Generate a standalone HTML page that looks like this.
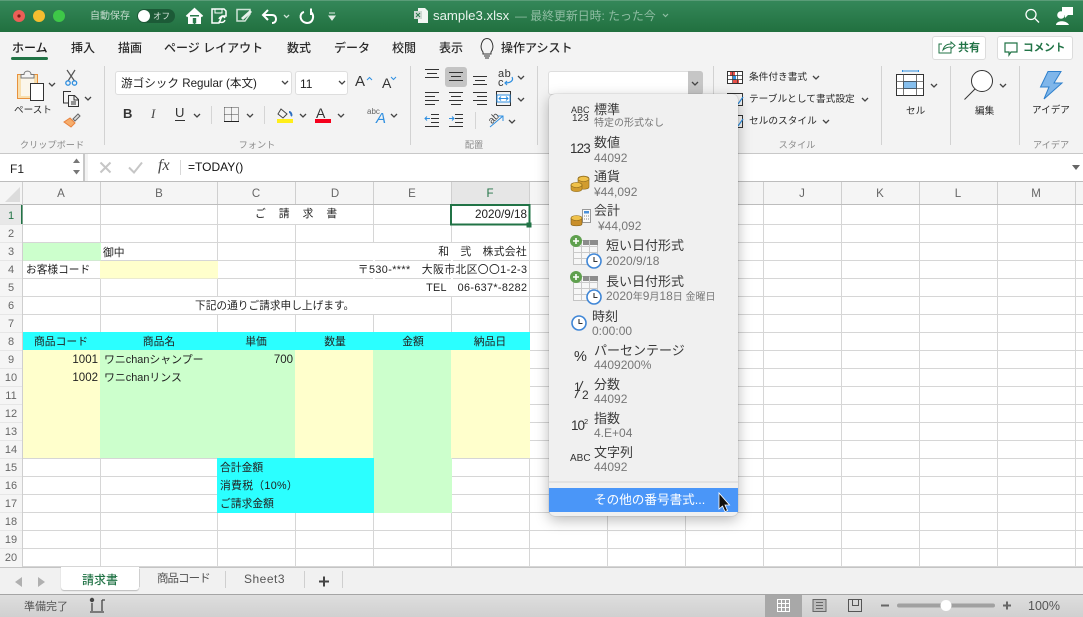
<!DOCTYPE html>
<html lang="ja"><head><meta charset="utf-8"><title>sample3.xlsx</title>
<style>
html,body{margin:0;padding:0;background:#fff}
#r{position:relative;width:1083px;height:617px;overflow:hidden;background:#fff;font-family:"Liberation Sans","Noto Sans CJK JP",sans-serif;color:#222}
.b{position:absolute}
.t{position:absolute;white-space:nowrap;line-height:16px;height:16px;font-size:11px}
.c{transform:translateX(-50%)}
.e{transform:translateX(-100%)}
.g{font-size:9.2px;color:#8a8a8a;top:137px}
.tab{font-size:12px;top:40px;color:#2b2b2b;font-weight:500}
.rn{font-size:11px;color:#666;left:11px;transform:translateX(-50%)}
.ch{font-size:11.5px;color:#666;top:186px;transform:translateX(-50%)}
.m1{font-size:13px;color:#3a3a3a}
.m2{font-size:12px;color:#777}
.m2 span{font-size:10px}
svg{position:absolute;left:0;top:0}
</style></head><body><div id="r">

<!-- title bar -->
<div class="b" style="left:0;top:0;width:1083px;height:32px;background:linear-gradient(#348759,#21703f);border-top:1px solid #5a9c78;box-sizing:border-box"></div>
<!-- ribbon -->
<div class="b" style="left:0;top:32px;width:1083px;height:122px;background:#f3f3f3;border-bottom:1px solid #c8c8c8;box-sizing:border-box"></div>
<!-- tabs -->
<div class="t tab" style="left:12px;color:#1c1c1c">ホーム</div>
<div class="b" style="left:11px;top:57px;width:37px;height:3px;background:#217346;border-radius:2px"></div>
<div class="t tab" style="left:71px">挿入</div>
<div class="t tab" style="left:118px">描画</div>
<div class="t tab" style="left:164px">ページ レイアウト</div>
<div class="t tab" style="left:287px">数式</div>
<div class="t tab" style="left:334px">データ</div>
<div class="t tab" style="left:392px">校閲</div>
<div class="t tab" style="left:439px">表示</div>
<div class="t tab" style="left:501px">操作アシスト</div>
<!-- share/comment -->
<div class="b" style="left:932px;top:36px;width:54px;height:24px;background:#fff;border:1px solid #dcdcdc;border-radius:3px;box-sizing:border-box"></div>
<div class="b" style="left:997px;top:36px;width:76px;height:24px;background:#fff;border:1px solid #dcdcdc;border-radius:3px;box-sizing:border-box"></div>
<div class="t" style="left:958px;top:40px;font-size:11px;color:#217346;font-weight:700">共有</div>
<div class="t" style="left:1023px;top:40px;font-size:10.6px;color:#217346;font-weight:700">コメント</div>
<!-- combos -->
<div class="b" style="left:115px;top:71px;width:177px;height:24px;background:#fff;border:1px solid #dedede;border-radius:3px;box-sizing:border-box"></div>
<div class="b" style="left:295px;top:71px;width:53px;height:24px;background:#fff;border:1px solid #dedede;border-radius:3px;box-sizing:border-box"></div>
<div class="t" style="left:121px;top:76px;font-size:11.6px;color:#222">游ゴシック Regular (本文)</div>
<div class="t" style="left:300px;top:76px;font-size:12px;color:#222">11</div>
<div class="b" style="left:548px;top:71px;width:155px;height:24px;background:#fff;border:1px solid #dedede;border-radius:3px;box-sizing:border-box"></div>
<div class="b" style="left:688px;top:71px;width:15px;height:24px;background:#c6c6c6;border-radius:0 3px 3px 0"></div>
<div class="b" style="left:445px;top:67px;width:22px;height:20px;background:#c4c4c4;border-radius:3px"></div>

<!-- ribbon text -->
<div class="t" style="left:14px;top:103px;font-size:9.6px;color:#2b2b2b">ペースト</div>
<div class="t g" style="left:52px;transform:translateX(-50%)">クリップボード</div>
<div class="t g" style="left:257px;transform:translateX(-50%)">フォント</div>
<div class="t g" style="left:474px;transform:translateX(-50%)">配置</div>
<div class="t g" style="left:797px;transform:translateX(-50%)">スタイル</div>
<div class="t g" style="left:1051px;transform:translateX(-50%)">アイデア</div>
<div class="t" style="left:749px;top:70px;font-size:9.7px;color:#2b2b2b">条件付き書式</div>
<div class="t" style="left:749px;top:92px;font-size:9.7px;color:#2b2b2b">テーブルとして書式設定</div>
<div class="t" style="left:749px;top:114px;font-size:9.7px;color:#2b2b2b">セルのスタイル</div>
<div class="t" style="left:906px;top:104px;font-size:9.6px;color:#2b2b2b">セル</div>
<div class="t" style="left:975px;top:104px;font-size:9.6px;color:#2b2b2b">編集</div>
<div class="t" style="left:1032px;top:103px;font-size:9.6px;color:#2b2b2b">アイデア</div>
<div class="t" style="left:123px;top:106px;font-size:13px;font-weight:700;color:#333">B</div>
<div class="t" style="left:151px;top:106px;font-size:13px;font-style:italic;font-family:'Liberation Serif',serif;color:#444">I</div>
<div class="t" style="left:175px;top:105px;font-size:13px;color:#333">U</div>
<div class="t" style="left:355px;top:74px;font-size:15px;color:#333">A</div>
<div class="t" style="left:382px;top:75px;font-size:14px;color:#333">A</div>
<div class="t" style="left:367px;top:104px;font-size:8px;color:#666">abc</div>
<div class="t" style="left:376px;top:111px;font-size:15px;font-style:italic;color:#2f8fe0">A</div>
<div class="t" style="left:498px;top:66px;font-size:11px;color:#333;letter-spacing:.5px">ab</div>
<div class="t" style="left:498px;top:75px;font-size:11px;color:#333">c</div>
<div class="t" style="left:316px;top:105px;font-size:14px;color:#333">A</div>

<!-- title text -->
<div class="t" style="left:90px;top:9px;font-size:10px;color:#c5dcce">自動保存</div>
<div class="t" style="left:433px;top:8px;font-size:13.2px;color:#e8f2ec">sample3.xlsx</div>
<div class="t" style="left:515px;top:8px;font-size:11.9px;color:#8fbda3">— 最終更新日時: たった今</div>

<!-- formula bar -->
<div class="b" style="left:0;top:154px;width:1083px;height:28px;background:#fff;border-bottom:1px solid #bdbdbd;box-sizing:border-box"></div>
<div class="b" style="left:0;top:154px;width:85px;height:27px;background:#fff;border-right:2px solid #c8c8c8;box-sizing:border-box"></div>
<div class="b" style="left:85px;top:154px;width:3px;height:27px;background:#f3f3f3"></div>
<div class="t" style="left:10px;top:161px;font-size:12px;color:#222">F1</div>
<div class="t" style="left:188px;top:159px;font-size:12px;color:#111">=TODAY()</div>
<div class="t" style="left:158px;top:158px;font-size:16px;font-style:italic;font-family:'Liberation Serif',serif;color:#444">fx</div>

<!-- header row -->
<div class="b" style="left:0;top:182px;width:1083px;height:23px;background:#f5f5f5;border-bottom:1px solid #bdbdbd;box-sizing:border-box"></div>
<div class="b" style="left:0;top:205px;width:22px;height:362px;background:#f5f5f5"></div>
<div class="b" style="left:451px;top:182px;width:78px;height:22px;background:#e6e6e6"></div>
<div class="b" style="left:0;top:205px;width:22px;height:19px;background:#e8e8e8"></div>

<!-- grid -->
<svg width="1083" height="617" viewBox="0 0 1083 617">
<polygon points="20,187 20,202 5,202" fill="#dcdcdc"/>
<path d="M22.5 182V567M100.5 182V204M217.5 182V204M295.5 182V204M373.5 182V204M451.5 182V204M529.5 182V204M607.5 182V204M685.5 182V204M763.5 182V204M841.5 182V204M919.5 182V204M997.5 182V204M1075.5 182V204" stroke="#cfcfcf" fill="none"/>
<path d="M0 224.5H22M0 242.5H22M0 260.5H22M0 278.5H22M0 296.5H22M0 314.5H22M0 332.5H22M0 350.5H22M0 368.5H22M0 386.5H22M0 404.5H22M0 422.5H22M0 440.5H22M0 458.5H22M0 476.5H22M0 494.5H22M0 512.5H22M0 530.5H22M0 548.5H22" stroke="#e6e6e6" fill="none"/>
<path d="M100.5 205V567M217.5 205V567M295.5 205V567M373.5 205V567M451.5 205V567M529.5 205V567M607.5 205V567M685.5 205V567M763.5 205V567M841.5 205V567M919.5 205V567M997.5 205V567M1075.5 205V567M23 224.5H1083M23 242.5H1083M23 260.5H1083M23 278.5H1083M23 296.5H1083M23 314.5H1083M23 332.5H1083M23 350.5H1083M23 368.5H1083M23 386.5H1083M23 404.5H1083M23 422.5H1083M23 440.5H1083M23 458.5H1083M23 476.5H1083M23 494.5H1083M23 512.5H1083M23 530.5H1083M23 548.5H1083M23 566.5H1083" stroke="#d6d6d6" fill="none"/>
<!-- merges -->
<rect x="295" y="205" width="2" height="19" fill="#fff"/>
<rect x="373" y="243" width="2" height="53" fill="#fff"/><rect x="451" y="243" width="2" height="53" fill="#fff"/>
<rect x="217" y="297" width="2" height="17" fill="#fff"/><rect x="295" y="297" width="2" height="17" fill="#fff"/><rect x="373" y="297" width="2" height="17" fill="#fff"/>
<!-- fills -->
<rect x="23" y="243" width="78" height="17.5" fill="#ccffcc"/>
<rect x="100" y="261" width="118" height="17.5" fill="#ffffcc"/>
<rect x="23" y="332" width="507" height="18" fill="#2bffff"/>
<rect x="23" y="350" width="78" height="108" fill="#ffffcc"/>
<rect x="100" y="350" width="196" height="108" fill="#ccffcc"/>
<rect x="295" y="350" width="79" height="108" fill="#ffffcc"/>
<rect x="373" y="350" width="79" height="163" fill="#ccffcc"/>
<rect x="451" y="350" width="79" height="108" fill="#ffffcc"/>
<rect x="217" y="458" width="157" height="55" fill="#2bffff"/>
<!-- selection -->
<rect x="451" y="205" width="78.5" height="19.5" fill="#fff" stroke="#217346" stroke-width="2"/>
<rect x="526.5" y="222.5" width="5" height="5" fill="#217346"/>
<rect x="21" y="205" width="1.5" height="19" fill="#217346"/>
</svg>

<!-- col letters -->
<div class="t ch" style="left:61px">A</div><div class="t ch" style="left:159px">B</div><div class="t ch" style="left:256px">C</div><div class="t ch" style="left:335px">D</div><div class="t ch" style="left:412px">E</div><div class="t ch" style="left:490px;color:#217346">F</div><div class="t ch" style="left:568px">G</div><div class="t ch" style="left:646px">H</div><div class="t ch" style="left:724px">I</div><div class="t ch" style="left:802px">J</div><div class="t ch" style="left:880px">K</div><div class="t ch" style="left:958px">L</div><div class="t ch" style="left:1036px">M</div>
<!-- row numbers -->
<div class="t rn" style="top:208px;color:#217346">1</div><div class="t rn" style="top:226px">2</div><div class="t rn" style="top:244px">3</div><div class="t rn" style="top:262px">4</div><div class="t rn" style="top:280px">5</div><div class="t rn" style="top:298px">6</div><div class="t rn" style="top:316px">7</div><div class="t rn" style="top:334px">8</div><div class="t rn" style="top:352px">9</div><div class="t rn" style="top:370px">10</div><div class="t rn" style="top:388px">11</div><div class="t rn" style="top:406px">12</div><div class="t rn" style="top:424px">13</div><div class="t rn" style="top:442px">14</div><div class="t rn" style="top:460px">15</div><div class="t rn" style="top:478px">16</div><div class="t rn" style="top:496px">17</div><div class="t rn" style="top:514px">18</div><div class="t rn" style="top:532px">19</div><div class="t rn" style="top:550px">20</div>

<!-- cells -->
<div class="t" style="left:255px;top:206px;letter-spacing:13px;font-size:10.8px">ご請求書</div>
<div class="t e" style="left:527px;top:207px;font-size:11.7px">2020/9/18</div>
<div class="t" style="left:103px;top:245px;font-size:10.8px">御中</div>
<div class="t" style="left:26px;top:262px;font-size:10.7px">お客様コード</div>
<div class="t e" style="left:527px;top:244px;font-size:10.8px;letter-spacing:.3px">和　弐　株式会社</div>
<div class="t e" style="left:527.4px;top:262px;font-size:10.8px;letter-spacing:.4px">〒530-****　大阪市北区〇〇1-2-3</div>
<div class="t e" style="left:527.3px;top:280px;font-size:10.8px;letter-spacing:.35px">TEL　06-637*-8282</div>
<div class="t" style="left:195px;top:298px;font-size:10.7px">下記の通りご請求申し上げます。</div>
<div class="t c" style="left:61px;top:334px;font-size:10.8px">商品コード</div>
<div class="t c" style="left:159px;top:334px;font-size:10.8px">商品名</div>
<div class="t c" style="left:256px;top:334px;font-size:10.8px">単価</div>
<div class="t c" style="left:335px;top:334px;font-size:10.8px">数量</div>
<div class="t c" style="left:413px;top:334px;font-size:10.8px">金額</div>
<div class="t c" style="left:490px;top:334px;font-size:10.8px">納品日</div>
<div class="t e" style="left:98px;top:352px;font-size:11.5px">1001</div>
<div class="t" style="left:104px;top:352px;font-size:10.9px">ワニchanシャンプー</div>
<div class="t e" style="left:293px;top:352px;font-size:11.5px">700</div>
<div class="t e" style="left:98px;top:370px;font-size:11.5px">1002</div>
<div class="t" style="left:104px;top:370px;font-size:10.9px">ワニchanリンス</div>
<div class="t" style="left:220px;top:460px;font-size:10.8px">合計金額</div>
<div class="t" style="left:220px;top:478px;font-size:10.8px;letter-spacing:.3px">消費税（10%）</div>
<div class="t" style="left:220px;top:496px;font-size:10.8px">ご請求金額</div>

<!-- tab bar -->
<div class="b" style="left:0;top:567px;width:1083px;height:27px;background:#f1f1f1;border-top:1px solid #c4c4c4;box-sizing:border-box"></div>
<div class="b" style="left:61px;top:567px;width:78px;height:23px;background:#fff;border-radius:0 0 3px 3px;box-shadow:0 1px 1px #bbb"></div>
<div class="t" style="left:82px;top:572px;font-size:12px;color:#217346;font-weight:500">請求書</div>
<div class="t" style="left:157px;top:571px;font-size:11.5px;letter-spacing:-.95px;color:#555">商品コード</div>
<div class="t" style="left:244px;top:571px;font-size:12px;letter-spacing:.5px;color:#555">Sheet3</div>
<!-- status bar -->
<div class="b" style="left:0;top:594px;width:1083px;height:23px;background:linear-gradient(#dedede,#d0d0d0);border-top:1px solid #a5a5a5;box-sizing:border-box"></div>
<div class="b" style="left:765px;top:595px;width:37px;height:22px;background:#a8a8a8"></div>
<div class="t" style="left:24px;top:599px;font-size:11px;color:#555">準備完了</div>
<div class="t" style="left:1028px;top:598px;font-size:12.5px;color:#555">100%</div>

<!-- icons -->
<svg width="1083" height="617" viewBox="0 0 1083 617" fill="none">
<!-- traffic lights -->
<circle cx="19" cy="16" r="6" fill="#ec5f57"/><circle cx="19" cy="16" r="1.6" fill="#7d1a14"/>
<circle cx="39" cy="16" r="6" fill="#f5bd2f"/><circle cx="59" cy="16" r="6" fill="#3ec848"/>
<!-- toggle -->
<rect x="137" y="9" width="38" height="14" rx="7" fill="#1c5a37"/><circle cx="144" cy="16" r="6" fill="#fff"/>
<!-- home -->
<path d="M186.500 16.500L194.500 9L202.500 16.500M189 15V23H193V18H196V23H200V15" stroke="#fff" stroke-width="2" fill="#fff" fill-rule="evenodd"/>
<rect x="192.800" y="18" width="3.400" height="5.500" fill="#2a7a4c"/>
<!-- save-sync -->
<path d="M212 9H224L226 11V16H222L219 23H212Z" stroke="#fff" stroke-width="1.500" fill="none"/><path d="M215 9V13H222V9" stroke="#fff"/>
<path d="M219 19C220 16 224 16 225 18M225 20C224 23 220 23 219 21" stroke="#fff" stroke-width="1.400"/>
<!-- edit -->
<path d="M237 9.500H250V14L245 21H237Z" stroke="#cfe3d7" stroke-width="1.500"/><path d="M241 18L250 10L252 12L243 20Z" fill="#e6f0ea"/>
<!-- undo -->
<path d="M268 10L263 15L268 20M263 15H272C275 15 276 17 276 19C276 21 275 23 272 23" stroke="#fff" stroke-width="2"/>
<path d="M284 15L286.500 17.500L289 15" stroke="#cfe3d7" stroke-width="1.300"/>
<!-- redo -->
<path d="M304 12C299 13 299 22 307 23C313 23 315 16 311 12L311 9M311 8.500V15" stroke="#fff" stroke-width="2"/>
<path d="M329 13H335M329 16H335L332 20Z" stroke="#e0ece5" fill="#e0ece5"/>
<!-- file icon -->
<path d="M418 8H425L428 11V23H418Z" fill="#f2f6f3"/><rect x="414" y="11" width="8" height="8" fill="#cfd9d3"/><path d="M416 13L420 17M420 13L416 17" stroke="#2a7a4c"/>
<path d="M663 14L665.500 16.500L668 14" stroke="#8fbda3" stroke-width="1.200"/>
<!-- search/person -->
<circle cx="1031" cy="14.500" r="5" stroke="#fff" stroke-width="1.300"/><path d="M1035 18.500L1039 22.500" stroke="#fff" stroke-width="1.300"/>
<circle cx="1061" cy="15" r="3.800" fill="#fff"/><path d="M1056 25C1056 20 1067 20 1069 25Z" fill="#fff"/><path d="M1062 7H1073V15H1068L1065 18V15H1062Z" fill="#fff"/>
<!-- bulb -->
<path d="M483 52C479 47 482 38.500 487 38.500C492 38.500 495 47 491 52V54H483ZM484 56H490M485 58H489" stroke="#333" stroke-width="1"/>
<!-- share icons -->
<path d="M942 44H939V53H951V49M943 50C944 46 947 44 951 44V42L955 45.500L951 49V47C948 47 945 48 943 50Z" stroke="#217346" stroke-width="1"/>
<path d="M1005 43H1017V52H1011L1009 55V52H1005Z" stroke="#217346" stroke-width="1.200"/>
<!-- separators -->
<path d="M104.500 66V145M410.500 66V145M537.500 66V145M713.500 66V145M881.500 66V145M950.500 66V145M1019.500 66V145" stroke="#d2d2d2"/>
<path d="M211.500 106V124M264.500 106V124" stroke="#d5d5d5"/><path d="M475.500 112V129" stroke="#d5d5d5"/>
<!-- paste -->
<rect x="17.500" y="74.500" width="20" height="24" fill="#f8dfae" stroke="#e8913c"/><rect x="21" y="74" width="13" height="22" fill="#fbf6ea"/>
<path d="M21 78V74.500H24C24 70 31 70 31 74.500H34V78Z" fill="#f4f4f4" stroke="#777"/>
<rect x="30.500" y="83.500" width="13" height="17" fill="#fff" stroke="#333"/>
<!-- scissors -->
<path d="M67 70L74.500 81M75 70L68 81" stroke="#555" stroke-width="1.200"/><circle cx="68" cy="83" r="2.200" stroke="#2f8fe0" stroke-width="1.300"/><circle cx="74.500" cy="83" r="2.200" stroke="#2f8fe0" stroke-width="1.300"/>
<!-- copy -->
<path d="M68 103H63.500V91.500H71" stroke="#333" stroke-width="1"/><path d="M68.500 95.500H74.500L78.500 99.500V106.500H68.500ZM74 95.500V100H78.500M71 102H76M71 104H76" stroke="#333" stroke-width="1"/>
<!-- brush -->
<path d="M70 118L75 123L71 127L64 122Z" fill="#f6ad6c" stroke="#e8813c"/><path d="M73 119L78 114L80 116L75 121Z" fill="#ddd" stroke="#666"/>
<!-- chevrons -->
<g stroke="#444" stroke-width="1.300">
<path d="M49 83L52 86L55 83"/><path d="M85 97L88 100L91 97"/>
<path d="M282 81L285 84L288 81"/><path d="M339 81L342 84L345 81"/>
<path d="M194 114L197 117L200 114"/><path d="M247 114L250 117L253 114"/><path d="M300 114L303 117L306 114"/><path d="M338 114L341 117L344 114"/><path d="M391 114L394 117L397 114"/>
<path d="M518 76L521 79L524 76"/><path d="M518 98L521 101L524 98"/><path d="M509 120L512 123L515 120"/>
<path d="M692 82L695 85L698 82"/>
<path d="M813 76L816 79L819 76"/><path d="M862 98L865 101L868 98"/><path d="M823 120L826 123L829 120"/>
<path d="M931 84L934 87L937 84"/><path d="M1000 84L1003 87L1006 84"/>
</g>
<path d="M367 80L369.500 77.500L372 80" stroke="#2f8fe0" stroke-width="1"/><path d="M391 77L393.500 79.500L396 77" stroke="#2f8fe0" stroke-width="1"/>
<!-- U underline -->
<path d="M175 120.500H185" stroke="#333"/>
<!-- borders -->
<path d="M224.500 107.500H238.500V120.500M224.500 107.500V120.500M231.500 107.500V120.500M224.500 114.500H238.500" stroke="#444" stroke-dasharray="1 1"/><path d="M224 121.500H239" stroke="#222"/>
<!-- fill -->
<path d="M281 109L287 114L283 118L278 114Z" stroke="#444"/><path d="M289 112C291 112 292 115 291 116" stroke="#2f6fc0" stroke-width="2"/>
<rect x="277" y="119" width="16" height="4" fill="#ffee1a"/><rect x="315" y="119" width="16" height="4" fill="#f5001c"/>
<!-- align -->
<g stroke="#333" stroke-width="1">
<path d="M425 69.500H439M427 73.500H437M425 77.500H439"/>
<path d="M449 72.500H463M451 76.500H461M449 80.500H463"/>
<path d="M473 76.500H487M475 80.500H485M473 84.500H487"/>
<path d="M425 92.500H439M425 96.500H435M425 100.500H439M425 104.500H435"/>
<path d="M449 92.500H463M451 96.500H461M449 100.500H463M451 104.500H461"/>
<path d="M473 92.500H487M477 96.500H487M473 100.500H487M477 104.500H487"/>
<path d="M431 114.500H439M431 118.500H439M431 122.500H439M425 126.500H439"/>
<path d="M455 114.500H463M455 118.500H463M455 122.500H463M449 126.500H463"/>
<rect x="496.500" y="91.500" width="14" height="14"/>
</g>
<rect x="497" y="95" width="13" height="7" fill="#fff" stroke="#2f8fe0"/><path d="M499 98.500H508M501 96.500L499 98.500L501 100.500M506 96.500L508 98.500L506 100.500" stroke="#2f8fe0"/>
<path d="M430 118.500H425M427 116.500L425 118.500L427 120.500M449 118.500H454M452 116.500L454 118.500L452 120.500" stroke="#2f8fe0"/>
<path d="M512 77C514 81 510 83 505 83M507 81L505 83L507 85" stroke="#2f8fe0" stroke-width="1.200"/>
<text x="488" y="121" font-size="10" fill="#444" transform="rotate(-45 494 118)" font-family="Liberation Sans">ab</text>
<path d="M490 127L503 116M498 116H503V121" stroke="#2f8fe0" stroke-width="1"/>
<!-- styles icons -->
<rect x="727.500" y="71.500" width="15" height="12" fill="#fff" stroke="#333"/><rect x="730" y="72" width="5" height="4" fill="#e8504a"/><rect x="733" y="80" width="6" height="3" fill="#e8504a"/><rect x="733" y="76" width="3" height="4" fill="#2f8fe0"/>
<path d="M727.500 75.500H742.500M727.500 79.500H742.500M732.500 71.500V83.500M737.500 71.500V83.500" stroke="#333" stroke-width=".7"/>
<path d="M727.500 93.500H742.500V105.500H727.500ZM727.500 115.500H742.500V127.500H727.500Z" stroke="#333"/>
<path d="M738 104L743 97M738 126L743 119" stroke="#2f8fe0" stroke-width="1.200"/>
<!-- cells -->
<path d="M902.500 70V72M918.500 70V72M902.500 71H918.500" stroke="#2f8fe0"/>
<rect x="896.500" y="74.500" width="27" height="21" fill="#fff" stroke="#333"/><rect x="903.500" y="81.500" width="13" height="7" fill="#86bfee" stroke="#1d6fb8"/>
<path d="M896.500 81.500H923.500M896.500 88.500H923.500M903.500 74.500V95.500M916.500 74.500V95.500" stroke="#555" stroke-width=".8"/>
<!-- edit magnifier -->
<circle cx="982" cy="81" r="10.500" fill="#fff" stroke="#333"/><path d="M975 89L964.500 99.500" stroke="#333"/>
<!-- lightning -->
<path d="M1048 71.500H1061L1054 83H1062L1044 99L1049 87H1040.500Z" fill="#7fb6ea" stroke="#2f80cc"/>
<!-- name box spinner -->
<path d="M73 163L76.500 158.500L80 163ZM73 170L76.500 174.500L80 170Z" fill="#777"/>
<!-- x check -->
<path d="M100.500 162.500L110.500 172.500M110.500 162.500L100.500 172.500" stroke="#c6c6c6" stroke-width="2"/>
<path d="M129 167.500L134 172.500L142 162.500" stroke="#c6c6c6" stroke-width="2"/>
<path d="M180.500 160V175" stroke="#d8d8d8"/>
<path d="M1072 165H1080L1076 170Z" fill="#666"/>
<!-- tab icons -->
<path d="M22 577L15 582L22 587Z" fill="#b0b0b0"/><path d="M38 577L45 582L38 587Z" fill="#b0b0b0"/>
<path d="M139.500 569V587M225.500 571V588M304.500 571V588M342.500 571V588" stroke="#cfcfcf"/>
<path d="M319 581.500H329M324 576.500V586.500" stroke="#444" stroke-width="2"/>
<!-- macro -->
<circle cx="92" cy="600" r="2.200" fill="#444"/><path d="M92 603V611M90 612H104M102 600H105M102 600V611" stroke="#444" stroke-width="1.300"/>
<!-- view -->
<rect x="777.500" y="599.500" width="12" height="12" stroke="#fff"/><path d="M777.500 603.500H789.500M777.500 607.500H789.500M781.500 599.500V611.500M785.500 599.500V611.500" stroke="#fff"/>
<rect x="813" y="599.500" width="13" height="12" fill="#bcbcbc" stroke="#666"/><path d="M816 602.500H823M816 605.500H823M816 608.500H823" stroke="#666"/>
<path d="M848.500 599.500H861.500V611.500H848.500ZM852.500 599.500V605.500H858.500V599.500" stroke="#555"/>
<path d="M881 605.500H889" stroke="#666" stroke-width="2"/>
<rect x="897" y="603.500" width="98" height="4" rx="2" fill="#a0a0a0"/><circle cx="946" cy="605.500" r="5.500" fill="#fff"/>
<path d="M1003 605.500H1011M1007 601.500V609.500" stroke="#666" stroke-width="2"/>
</svg>
<div class="t" style="left:153px;top:8px;font-size:8.5px;color:#d6e6dc">オフ</div>

<!-- dropdown menu -->
<div class="b" style="left:549px;top:94px;width:189px;height:422px;background:#f0f0f0;border-radius:6px;box-shadow:0 0 1px rgba(0,0,0,.35),0 4px 14px rgba(0,0,0,.28)"></div>
<div class="b" style="left:549px;top:481px;width:189px;height:2px;background:#e2e2e2"></div>
<div class="b" style="left:549px;top:488px;width:189px;height:24px;background:#4a96f8"></div>

<div class="t m1" style="left:594px;top:102px">標準</div><div class="t m2" style="left:594px;top:114px"><span>特定の形式なし</span></div>
<div class="t m1" style="left:594px;top:135px">数値</div><div class="t m2" style="left:594px;top:150px">44092</div>
<div class="t m1" style="left:594px;top:169px">通貨</div><div class="t m2" style="left:594px;top:184px">¥44,092</div>
<div class="t m1" style="left:594px;top:203px">会計</div><div class="t m2" style="left:598px;top:218px">¥44,092</div>
<div class="t m1" style="left:606px;top:238px">短い日付形式</div><div class="t m2" style="left:606px;top:253px">2020/9/18</div>
<div class="t m1" style="left:606px;top:274px">長い日付形式</div><div class="t m2" style="left:606px;top:288px">2020<span>年</span>9<span>月</span>18<span>日 金曜日</span></div>
<div class="t m1" style="left:592px;top:309px">時刻</div><div class="t m2" style="left:592px;top:323px">0:00:00</div>
<div class="t m1" style="left:594px;top:343px">パーセンテージ</div><div class="t m2" style="left:594px;top:357px">4409200%</div>
<div class="t m1" style="left:594px;top:377px">分数</div><div class="t m2" style="left:594px;top:391px">44092</div>
<div class="t m1" style="left:594px;top:411px">指数</div><div class="t m2" style="left:594px;top:425px">4.E+04</div>
<div class="t m1" style="left:594px;top:445px">文字列</div><div class="t m2" style="left:594px;top:459px">44092</div>
<div class="t" style="left:594px;top:492px;font-size:12.6px;color:#fff">その他の番号書式...</div>

<div class="t" style="left:571px;top:102px;font-size:9px;color:#333">ABC</div>
<div class="t" style="left:572px;top:111px;font-size:10px;color:#333">123</div>
<div class="t" style="left:570px;top:141px;font-size:13.5px;letter-spacing:-.9px;color:#333">123</div>
<div class="t" style="left:574px;top:349px;font-size:14.5px;color:#333">%</div>
<div class="t" style="left:574px;top:379px;font-size:12px;color:#333">1</div>
<div class="t" style="left:582px;top:387px;font-size:12px;color:#333">2</div>
<div class="t" style="left:571px;top:418px;font-size:13.5px;letter-spacing:-1px;color:#333">10</div>
<div class="t" style="left:584px;top:414px;font-size:7.5px;color:#333">2</div>
<div class="t" style="left:570px;top:451px;font-size:10px;color:#333">ABC</div>

<svg width="1083" height="617" viewBox="0 0 1083 617" fill="none">
<path d="M583 381L575 398" stroke="#333"/>
<!-- coins -->
<ellipse cx="583.500" cy="178.500" rx="5.500" ry="2.500" fill="#e6b33a" stroke="#8d6a1c" stroke-width=".6"/>
<path d="M578 179V187C578 190 589 190 589 187V179" fill="#d19c2e" stroke="#8d6a1c" stroke-width=".6"/>
<ellipse cx="583.500" cy="179" rx="5.500" ry="2.500" fill="#efc14a" stroke="#8d6a1c" stroke-width=".6"/>
<ellipse cx="576.500" cy="185" rx="5.500" ry="2.500" fill="#efc14a" stroke="#8d6a1c" stroke-width=".6"/>
<path d="M571 185V189C571 192.500 582 192.500 582 189V185" fill="#d19c2e" stroke="#8d6a1c" stroke-width=".6"/>
<ellipse cx="576.500" cy="185" rx="5.500" ry="2.500" fill="#efc14a" stroke="#8d6a1c" stroke-width=".6"/>
<!-- calc coins -->
<rect x="582.500" y="209.500" width="8" height="13" fill="#fafafa" stroke="#999"/><rect x="584" y="211" width="5" height="2.500" fill="#4a90d9"/><path d="M584 216H589M584 219H589" stroke="#888" stroke-dasharray="1 1"/>
<path d="M571 218V224C571 226.500 582 226.500 582 224V218" fill="#c98f2a" stroke="#7d5c16" stroke-width=".6"/>
<ellipse cx="576.500" cy="218" rx="5.500" ry="2.500" fill="#efc14a" stroke="#8d6a1c" stroke-width=".6"/>
<!-- calendars -->
<rect x="573.500" y="240.500" width="24" height="24" fill="#f7f7f7" stroke="#c4c4c4"/>
<rect x="583" y="240" width="15" height="5" fill="#8c8c8c"/>
<path d="M573.500 246.500H597.500M573.500 252.500H597.500M573.500 258.500H597.500M581.500 240.500V264.500M589.500 240.500V264.500" stroke="#cacaca"/>
<circle cx="576" cy="241" r="6" fill="#5fa04e"/><path d="M573 241H579M576 238V244" stroke="#fff" stroke-width="1.600"/>
<circle cx="594" cy="261" r="7" fill="#fff" stroke="#3f86d6" stroke-width="1.600"/><path d="M594 257V261.500H597.500" stroke="#333" stroke-width="1.100"/>
<g transform="translate(0,36)">
<rect x="573.500" y="240.500" width="24" height="24" fill="#f7f7f7" stroke="#c4c4c4"/>
<rect x="583" y="240" width="15" height="5" fill="#8c8c8c"/>
<path d="M573.500 246.500H597.500M573.500 252.500H597.500M573.500 258.500H597.500M581.500 240.500V264.500M589.500 240.500V264.500" stroke="#cacaca"/>
<circle cx="576" cy="241" r="6" fill="#5fa04e"/><path d="M573 241H579M576 238V244" stroke="#fff" stroke-width="1.600"/>
<circle cx="594" cy="261" r="7" fill="#fff" stroke="#3f86d6" stroke-width="1.600"/><path d="M594 257V261.500H597.500" stroke="#333" stroke-width="1.100"/>
</g>
<circle cx="579" cy="323" r="7" fill="#fff" stroke="#3f86d6" stroke-width="1.600"/><path d="M579 319V323.500H582.500" stroke="#333" stroke-width="1.100"/>
<!-- cursor -->
<path d="M719 493V509L722.500 506L725 511.500L727.500 510.500L725 505H729.500Z" fill="#111" stroke="#fff" stroke-width=".8"/>
</svg>
</div></body></html>
